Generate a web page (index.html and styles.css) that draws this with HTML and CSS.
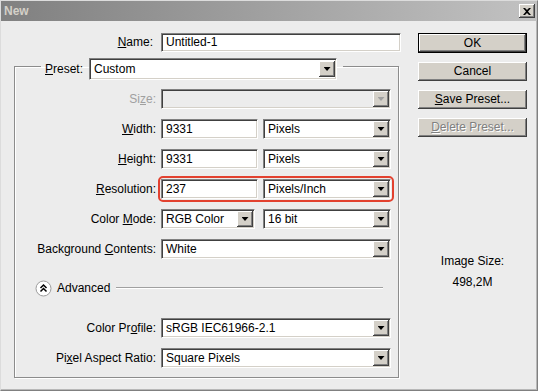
FILE: index.html
```html
<!DOCTYPE html>
<html lang="en">
<head>
  <meta charset="UTF-8">
  <title>New</title>
  <link rel="stylesheet" href="styles.css">
</head>
<body>
  <div class="window">
    <div class="titlebar">
      <span class="title">New</span>
      <span class="close">
        <svg width="8" height="7" viewBox="0 0 8 7"><path d="M0 0h2l2 2 2-2h2L5 3.5 8 7H6L4 5 2 7H0l3-3.5z" fill="#000"/></svg>
      </span>
    </div>

    <div class="dialog">
      <div class="form">
        <div class="name-row">
          <span class="label name-label"><u>N</u>ame:</span>
          <div class="field name-field">Untitled-1</div>
        </div>

        <fieldset class="group">
          <legend class="preset">
            <span class="label"><u>P</u>reset:</span>
            <div class="combo preset-combo"><span class="value">Custom</span><span class="arrow"></span></div>
          </legend>

          <div class="rows">
            <span class="label disabled">Si<u>z</u>e:</span>
            <div class="combo span2 is-disabled"><span class="value"></span><span class="arrow"></span></div>

            <span class="label"><u>W</u>idth:</span>
            <div class="field">9331</div>
            <div class="combo"><span class="value">Pixels</span><span class="arrow"></span></div>

            <span class="label"><u>H</u>eight:</span>
            <div class="field">9331</div>
            <div class="combo"><span class="value">Pixels</span><span class="arrow"></span></div>

            <span class="label"><u>R</u>esolution:</span>
            <div class="highlight span2">
              <div class="field">237</div>
              <div class="combo"><span class="value">Pixels/Inch</span><span class="arrow"></span></div>
            </div>

            <span class="label">Color <u>M</u>ode:</span>
            <div class="combo mode-combo"><span class="value">RGB Color</span><span class="arrow"></span></div>
            <div class="combo"><span class="value">16 bit</span><span class="arrow"></span></div>

            <span class="label">Background <u>C</u>ontents:</span>
            <div class="combo span2"><span class="value">White</span><span class="arrow"></span></div>
          </div>

          <div class="advanced">
            <svg class="adv-icon" width="17" height="17" viewBox="0 0 17 17">
              <circle cx="8.5" cy="8.5" r="7.5" fill="#fff" stroke="#9c9c9c"/>
              <path d="M5.5 8 8.5 5l3 3M5.5 11.5l3-3 3 3" fill="none" stroke="#000" stroke-width="1.5"/>
            </svg>
            <span class="adv-text">Advanced</span>
            <span class="adv-line"></span>
          </div>

          <div class="rows">
            <span class="label">Color Pr<u>o</u>file:</span>
            <div class="combo span2"><span class="value">sRGB IEC61966-2.1</span><span class="arrow"></span></div>

            <span class="label">Pi<u>x</u>el Aspect Ratio:</span>
            <div class="combo span2"><span class="value">Square Pixels</span><span class="arrow"></span></div>
          </div>
        </fieldset>
      </div>

      <div class="side">
        <div class="btn btn-default">OK</div>
        <div class="btn">Cancel</div>
        <div class="btn"><u>S</u>ave Preset...</div>
        <div class="btn btn-disabled"><u>D</u>elete Preset...</div>

        <div class="image-size">
          <div>Image Size:</div>
          <div class="size-value">498,2M</div>
        </div>
      </div>
    </div>
  </div>
</body>
</html>
```

FILE: styles.css
```css
* {
  margin: 0;
  padding: 0;
  box-sizing: border-box;
}

body {
  font-family: 'Liberation Sans', Arial, sans-serif;
  font-size: 12px;
  color: #000;
  background: #ececec;
}

.window {
  width: 538px;
  height: 391px;
  background: #ececec;
  border-top: 1px solid #dcdcdc;
  border-left: 1px solid #dcdcdc;
  border-right: 1px solid #808080;
  border-bottom: 1px solid #808080;
  box-shadow: inset -1px -1px 0 #b8b8b8;
}

/* title bar */
.titlebar {
  height: 20px;
  display: flex;
  align-items: center;
  justify-content: space-between;
  padding: 0 2px 0 3px;
  background: linear-gradient(to right, #808080, #c2c2c2);
}

.title {
  font-weight: bold;
  color: #d4d0c8;
  font-size: 12px;
}

.close {
  width: 16px;
  height: 14px;
  display: flex;
  align-items: center;
  justify-content: center;
  background: #d4d0c8;
  box-shadow: inset -1px -1px #404040, inset 1px 1px #fff, inset -2px -2px #808080;
}

/* layout */
.dialog {
  display: flex;
  padding-top: 12px;
}

.form {
  width: 400px;
}

.side {
  width: 109px;
  margin-left: 17px;
  display: flex;
  flex-direction: column;
  gap: 9px;
}

.label {
  line-height: 20px;
  text-align: right;
  white-space: nowrap;
}

.label.disabled {
  color: #a0a0a0;
}

.name-row {
  display: flex;
  gap: 8px;
}

.name-label {
  width: 152px;
  line-height: 19px;
}

/* inputs */
.field,
.combo {
  height: 20px;
  background: #fff;
  border: 1px solid;
  border-color: #808080 #fff #fff #808080;
  box-shadow: inset 1px 1px 0 #404040, inset -1px -1px 0 #d4d0c8;
}

.field {
  padding-left: 4px;
  line-height: 18px;
}

.name-field {
  width: 240px;
  height: 19px;
  line-height: 17px;
}

.combo {
  display: flex;
  align-items: center;
  padding: 1px;
}

.combo .value {
  flex: 1;
  padding-left: 3px;
}

.arrow {
  width: 16px;
  height: 16px;
  display: flex;
  align-items: center;
  justify-content: center;
  background: #d4d0c8;
  box-shadow: inset -1px -1px #404040, inset 1px 1px #fff, inset -2px -2px #808080;
}

.arrow::after {
  content: '';
  width: 7px;
  height: 4px;
  background: #000;
  clip-path: polygon(0 0, 100% 0, 50% 100%);
}

.combo.is-disabled {
  background: #ececec;
}

.combo.is-disabled .arrow::after {
  background: #a0a0a0;
}

/* group box */
.group {
  margin: 6px 0 0 13px;
  width: 385px;
  border: 1px solid #8c8c8c;
  box-shadow: 1px 1px 0 #fff, inset 1px 1px 0 #fff;
  padding: 15px 0 9px 0;
  min-inline-size: 0;
}

.preset {
  margin-left: 26px;
  padding: 0 6px 0 4px;
  height: 16px;
  display: flex;
  align-items: flex-start;
  gap: 6px;
}

.preset .label {
  line-height: 22px;
}

.preset-combo {
  width: 248px;
  height: 22px;
}

.rows {
  display: grid;
  grid-template-columns: 141px 97px 128px;
  column-gap: 5px;
  row-gap: 10px;
}

.span2 {
  grid-column: span 2;
}

.mode-combo {
  width: 94px;
}

.highlight {
  display: grid;
  grid-template-columns: 97px 128px;
  column-gap: 5px;
  margin: -3px;
  padding: 1px;
  border: 2px solid #e2412f;
  border-radius: 5px;
}

/* advanced */
.advanced {
  display: flex;
  align-items: center;
  height: 18px;
  margin: 20px 15px 21px 20px;
}

.adv-text {
  margin-left: 5px;
}

.adv-line {
  flex: 1;
  margin-left: 6px;
  height: 2px;
  border-top: 1px solid #a0a0a0;
  border-bottom: 1px solid #fff;
}

/* buttons */
.btn {
  height: 19px;
  line-height: 19px;
  text-align: center;
  background: #d4d0c8;
  box-shadow: inset -1px -1px #404040, inset 1px 1px #fff, inset -2px -2px #808080;
}

.btn-default {
  height: 20px;
  line-height: 18px;
  border: 1px solid #000;
}

.btn-disabled {
  color: #808080;
  text-shadow: 1px 1px 0 #fff;
}

.image-size {
  margin-top: 108px;
  text-align: center;
  line-height: 14px;
}

.size-value {
  margin-top: 7px;
}
```
